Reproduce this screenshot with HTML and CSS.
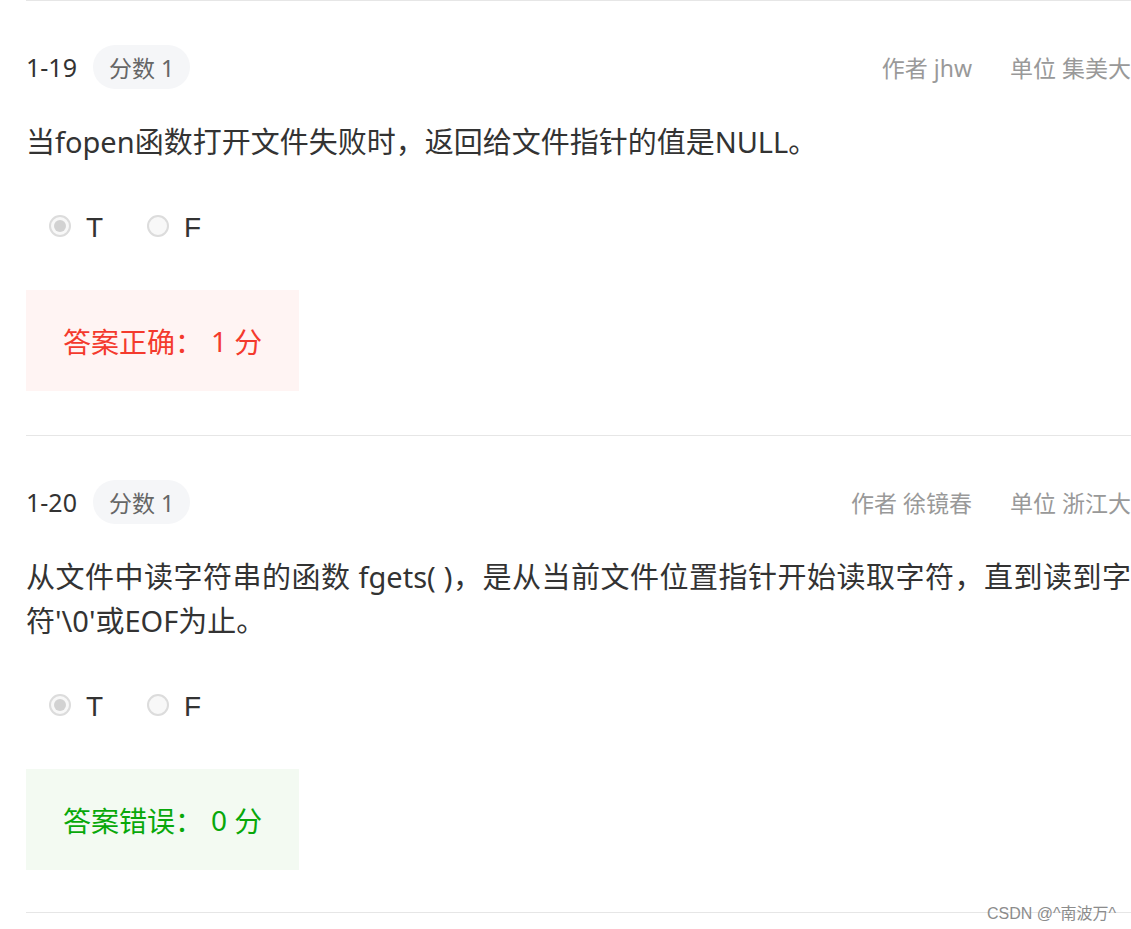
FILE: index.html
```html
<!DOCTYPE html>
<html lang="zh-CN">
<head>
<meta charset="utf-8">
<title>判断题</title>
<link rel="stylesheet" href="styles.css">
</head>
<body>
<div class="page">
  <section class="question">
    <div class="q-head">
      <div class="q-left">
        <span class="q-num">1-19</span>
        <span class="q-score">分数 1</span>
      </div>
      <div class="q-meta">
        <span>作者 jhw</span>
        <span>单位 集美大</span>
      </div>
    </div>
    <p class="q-text">当fopen函数打开文件失败时，返回给文件指针的值是NULL。</p>
    <div class="q-options">
      <label class="opt"><span class="radio checked"></span><span class="opt-label">T</span></label>
      <label class="opt"><span class="radio"></span><span class="opt-label">F</span></label>
    </div>
    <div class="result correct">答案正确：<span class="pts">1</span> 分</div>
  </section>
  <section class="question">
    <div class="q-head">
      <div class="q-left">
        <span class="q-num">1-20</span>
        <span class="q-score">分数 1</span>
      </div>
      <div class="q-meta">
        <span>作者 徐镜春</span>
        <span>单位 浙江大</span>
      </div>
    </div>
    <p class="q-text">从文件中读字符串的函数 fgets( )，是从当前文件位置指针开始读取字符，直到读到字符'\0'或EOF为止。</p>
    <div class="q-options">
      <label class="opt"><span class="radio checked"></span><span class="opt-label">T</span></label>
      <label class="opt"><span class="radio"></span><span class="opt-label">F</span></label>
    </div>
    <div class="result wrong">答案错误：<span class="pts">0</span> 分</div>
  </section>
  <div class="watermark">CSDN @^南波万^</div>
</div>
</body>
</html>
```
FILE: styles.css
```css
html, body {
  margin: 0;
  padding: 0;
  background: #ffffff;
  overflow: hidden;
}
body {
  font-family: "Noto Sans", "Noto Sans CJK SC", sans-serif;
  color: #333333;
}
.page {
  position: relative;
  margin-left: 26px;
  width: 1105px;
  height: 929px;
}
.question {
  border-top: 1px solid #e6e6e6;
  padding: 44px 0 44px;
}
.question + .question {
  padding-bottom: 42px;
  border-bottom: 1px solid #e6e6e6;
}
.q-head {
  display: flex;
  align-items: center;
  justify-content: space-between;
  height: 44px;
}
.q-left {
  display: flex;
  align-items: center;
  gap: 16px;
}
.q-num {
  font-size: 25px;
  color: #333333;
}
.q-score {
  display: inline-flex;
  align-items: center;
  height: 44px;
  padding: 0 16px;
  border-radius: 22px;
  background: #f5f6f8;
  color: #666666;
  font-size: 23px;
}
.q-meta {
  display: flex;
  gap: 38px;
  font-size: 23px;
  color: #999999;
  white-space: nowrap;
}
.q-text {
  margin: 31px 0 0;
  font-size: 29px;
  line-height: 44px;
  color: #333333;
  text-align: justify;
}
.q-options {
  display: flex;
  gap: 44px;
  margin: 42px 0 0 23px;
  height: 40px;
  align-items: center;
}
.opt {
  display: flex;
  align-items: center;
  gap: 15px;
}
.radio {
  box-sizing: border-box;
  width: 22px;
  height: 22px;
  border-radius: 50%;
  border: 2px solid #dcdcdc;
  background: #f8f8f8;
  display: flex;
  align-items: center;
  justify-content: center;
}
.radio.checked::after {
  content: "";
  width: 12px;
  height: 12px;
  border-radius: 50%;
  background: #d2d2d2;
}
.opt-label {
  font-family: "Liberation Sans", "Noto Sans", sans-serif;
  font-size: 28px;
  color: #333333;
  position: relative;
  top: 2px;
}
.result {
  margin-top: 44px;
  width: 273px;
  height: 101px;
  box-sizing: border-box;
  padding-left: 37px;
  display: flex;
  align-items: center;
  font-size: 28px;
  white-space: pre;
}
.pts {
  margin-left: 8px;
}
.result.correct {
  background: #fff4f3;
  color: #f43a2d;
}
.result.wrong {
  background: #f3faf2;
  color: #08a80a;
}
.watermark {
  position: absolute;
  right: 15px;
  top: 900px;
  font-family: "Liberation Sans", "Noto Sans CJK SC", sans-serif;
  font-size: 16px;
  color: #8c8c8c;
}
```
